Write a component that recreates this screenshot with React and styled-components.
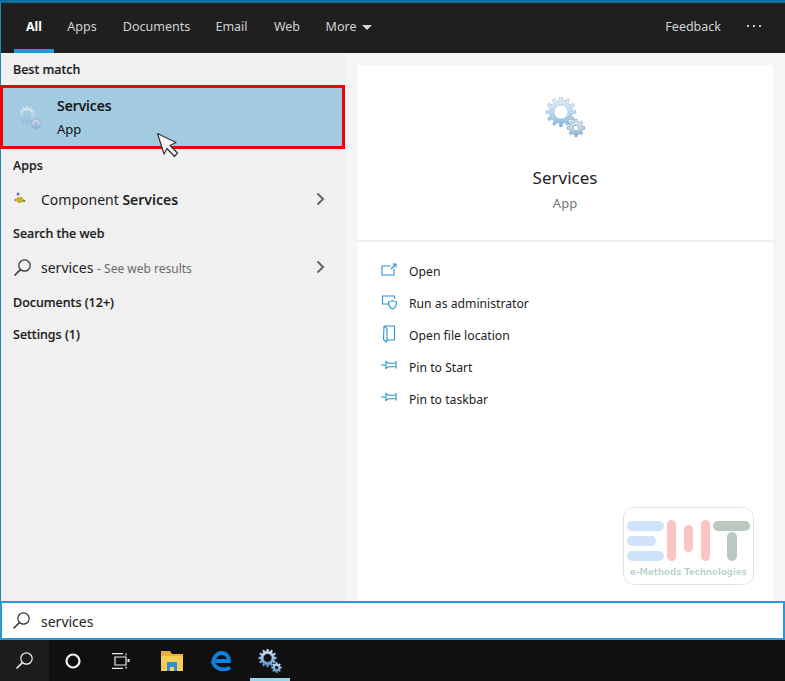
import React, { useId } from "react";
import styled, { createGlobalStyle } from "styled-components";

const Global = createGlobalStyle`
  html, body { margin: 0; padding: 0; background: #101010; }
  body { font-family: "Noto Sans", "Open Sans", sans-serif; }
`;
const Shell = styled.div`
  position: relative; width: 785px; height: 681px; overflow: hidden;
  display: flex; flex-direction: column; background: #101010;
`;
const Header = styled.header`
  height: 50px; flex: none; margin-top: 3px; padding-left: 14px; padding-right: 24px;
  box-shadow: 0 -3px 0 #0e6f9e, inset 1px 0 0 #1b88bd;
  background: #1f1f1f; display: flex; align-items: stretch; position: relative;
`;
const Tab = styled.div`
  width: ${p => p.$w}px; display: flex; align-items: center; justify-content: center; gap: 6px;
  color: ${p => (p.$active ? "#fff" : "#d2d2d2")}; font-size: 12.5px; font-weight: ${p => (p.$active ? 700 : 400)};
  box-shadow: ${p => (p.$active ? "inset 0 -4px 0 #2497d6" : "none")};
  padding-bottom: 4px; box-sizing: border-box;
`;
const Caret = styled.span`
  width: 0; height: 0; border-left: 5px solid transparent; border-right: 5px solid transparent;
  border-top: 5px solid #d8d8d8; margin-top: 2px;
`;
const HeaderRight = styled.div`
  margin-left: auto; display: flex; align-items: center; gap: 26px; color: #d2d2d2; font-size: 12.5px; padding-bottom: 4px;
`;
const Dots = styled.span`
  display: flex; gap: 4px;
  & i { width: 2px; height: 2px; background: #c8c8c8; display: block; }
`;
const Body = styled.main`
  height: 548px; flex: none; display: flex; background: #f5f5f5; box-shadow: inset 1px 0 0 #1b88bd;
`;
const Left = styled.section`
  width: 345px; flex: none; display: flex; flex-direction: column; background: #f0f0f0;
  box-shadow: inset 1px 0 0 #1b88bd; box-sizing: border-box;
`;
const Label = styled.div`
  height: ${p => p.$h}px; flex: none; padding-left: 13px; display: flex; align-items: center;
  font-size: 12.5px; font-weight: 500; color: #1b1b1b; -webkit-text-stroke: 0.2px #1b1b1b;
`;
const Best = styled.div`
  height: 64px; flex: none; box-sizing: border-box; border: 3px solid #f40000; background: #a2cbe2;
  display: flex; align-items: center; padding-left: 15px; gap: 16px;
`;
const BestText = styled.div`
  display: flex; flex-direction: column; gap: 3px; color: #111; padding-top: 1px;
`;
const BestTitle = styled.div`
  font-size: 14px; line-height: 20px; font-weight: 500; -webkit-text-stroke: 0.2px #111;
`;
const BestSub = styled.div`
  font-size: 13px; line-height: 20px;
`;
const Row = styled.div`
  height: 34px; flex: none; display: flex; align-items: center; padding: 0 20px 0 13px; font-size: 14px; color: #222;
`;
const RowIcon = styled.span`
  width: 28px; flex: none; display: flex; align-items: center;
`;
const RowText = styled.span`
  flex: 1; white-space: nowrap;
  & b { font-weight: 600; }
  & small { font-size: 12px; color: #6b6b6b; }
`;
const Right = styled.section`
  flex: 1; margin: 12px 12px 0; background: #fff; display: flex; flex-direction: column;
`;
const Hero = styled.div`
  height: 177px; flex: none; box-sizing: border-box; border-bottom: 2px solid #f0f0f0;
  display: flex; flex-direction: column; align-items: center; padding-top: 32px;
`;
const HeroTitle = styled.div`
  font-size: 17px; line-height: 24px; color: #222; margin-top: 29px;
`;
const HeroSub = styled.div`
  font-size: 13px; line-height: 18px; color: #757575; margin-top: 4px;
`;
const Actions = styled.div`
  display: flex; flex-direction: column; padding: 13px 0 0 24px;
`;
const Action = styled.div`
  height: 32px; display: flex; align-items: center; gap: 12px; font-size: 12.2px; color: #222;
`;
const ActionIcon = styled.svg`
  width: 16px; height: 18px; flex: none; fill: none; stroke: #2a93d2; stroke-width: 1.1; margin-bottom: 3px;
`;
const Watermark = styled.div`
  position: absolute; left: 623px; top: 507px; width: 131px; height: 78px; box-sizing: border-box;
  border: 1px solid #dbe9e2; border-radius: 11px; background: #fff; padding: 12px 3px 0 3px; filter: blur(0.5px);
`;
const MarkArt = styled.svg`
  display: block; width: 123px; height: 42px;
`;
const MarkText = styled.div`
  font-family: "DejaVu Sans", sans-serif; font-weight: 700; font-size: 8.6px; color: #b9d6c8; line-height: 12px; margin-top: 4px;
  white-space: nowrap; text-align: center;
`;
const SearchBox = styled.div`
  height: 39px; flex: none; box-sizing: border-box; border: 2px solid #2a9ad6; background: #fff;
  display: flex; align-items: center; padding-left: 10px; gap: 10px; font-size: 14px; color: #222;
`;
const SearchText = styled.span`
  padding-top: 2px;
`;
const Taskbar = styled.footer`
  height: 41px; flex: none; background: #101010; display: flex; align-items: stretch;
`;
const TaskBtn = styled.div`
  width: ${p => p.$w}px; flex: none; display: flex; align-items: center; justify-content: center; box-sizing: border-box;
  margin-left: ${p => p.$gap || 0}px;
  background: ${p => (p.$hot ? "#1c1c1c" : "transparent")};
  box-shadow: ${p => (p.$open ? "inset 0 -3px 0 #9fd3ee" : "none")};
`;
const Cursor = styled.svg`
  position: absolute; left: 156px; top: 132px; width: 24px; height: 26px;
`;

function gearPath(cx, cy, ro, ri, hole, teeth) {
  const pts = [];
  const step = (Math.PI * 2) / teeth;
  for (let i = 0; i < teeth; i++) {
    const a = i * step - Math.PI / 2;
    [[-0.3, ri], [-0.17, ro], [0.17, ro], [0.3, ri]].forEach(([f, r]) => {
      const t = a + f * step;
      pts.push(`${(cx + r * Math.cos(t)).toFixed(2)} ${(cy + r * Math.sin(t)).toFixed(2)}`);
    });
  }
  return `M${pts.join("L")}Z M${cx - hole} ${cy}a${hole} ${hole} 0 1 0 ${hole * 2} 0a${hole} ${hole} 0 1 0 ${-hole * 2} 0Z`;
}

function Gears({ size, dark }) {
  const id = useId();
  return (
    <svg width={size} height={size} viewBox="0 0 40 40" style={{ display: "block" }}>
      <defs>
        <linearGradient id={id} x1="0" y1="0" x2="0" y2="1">
          <stop offset="0" stopColor={dark ? "#d8e8f7" : "#e3edf5"} />
          <stop offset="0.55" stopColor={dark ? "#8fbeea" : "#b9d6ef"} />
          <stop offset="1" stopColor={dark ? "#4a86c4" : "#7fb0df"} />
        </linearGradient>
      </defs>
      <path fillRule="evenodd" fill={`url(#${id})`} stroke={dark ? "#8fa9c0" : "#a9bccb"} strokeWidth="0.6" d={gearPath(16, 15, 15, 11.5, 7, 12)} />
      <path fillRule="evenodd" fill={`url(#${id})`} stroke={dark ? "#8fa9c0" : "#71879a"} strokeWidth="0.6" d={gearPath(31, 31, 8.6, 6.4, 3, 8)} />
    </svg>
  );
}

const Mag = ({ size = 19, color = "#333" }) => (
  <svg width={size} height={size} viewBox="0 0 19 19" fill="none" stroke={color} strokeWidth="1.2" style={{ display: "block" }}>
    <circle cx="11.5" cy="7.5" r="5.7" />
    <path d="M7.4 11.6 1.5 17.5" strokeWidth="1.5" />
  </svg>
);

const Chevron = () => (
  <svg width="9" height="14" viewBox="0 0 9 14" fill="none" stroke="#666" strokeWidth="2" style={{ display: "block" }}>
    <path d="M1.5 1.5 7 7l-5.5 5.5" />
  </svg>
);

const OpenIcon = () => (
  <ActionIcon viewBox="0 0 16 18"><path d="M9.5 5H1v9h12V8M10 8l5-5M11.5 3H15v3.5" /></ActionIcon>
);
const AdminIcon = () => (
  <ActionIcon viewBox="0 0 16 18"><path d="M7 11H1.500V3h12v3" /><path d="M7.500 9c2 0 3-.8 4-1.500 1 .7 2 1.500 4 1.500 0 3.500-1.500 6-4 7-2.500-1-4-3.500-4-7Z" /></ActionIcon>
);
const FolderIcon = () => (
  <ActionIcon viewBox="0 0 16 18"><path d="M3 1h10.500v14H6M3 1 2.500 14.500 5 17l1-2M3 1l3 2.500V15" /></ActionIcon>
);
const PinIcon = () => (
  <ActionIcon viewBox="0 0 16 18"><path d="M0 8h5M5 4.500v7l2.500-1.800H15V6.300H7.500L5 4.500ZM15 4v7.500" /></ActionIcon>
);

const ComponentIcon = () => (
  <svg width="16" height="16" viewBox="0 0 16 16" style={{ display: "block" }}>
    <circle cx="5" cy="3" r="1.500" fill="#5a6fc2" />
    <circle cx="2.500" cy="9" r="1.500" fill="#c98a80" />
    <path d="M4 6h5l2 3-3 3H5L3.500 9Z" fill="#c8b71c" />
    <circle cx="11" cy="10" r="1.300" fill="#4d9a52" />
  </svg>
);

const tabs = [
  ["All", 40, true], ["Apps", 56], ["Documents", 93], ["Email", 57], ["Web", 54], ["More", 70],
];
const actions = [
  ["Open", OpenIcon], ["Run as administrator", AdminIcon], ["Open file location", FolderIcon],
  ["Pin to Start", PinIcon], ["Pin to taskbar", PinIcon],
];

export default function App() {
  return (
    <Shell>
      <Global />
      <Header>
        {tabs.map(([t, w, a]) => (
          <Tab key={t} $w={w} $active={a}>
            {t}{t === "More" && <Caret />}
          </Tab>
        ))}
        <HeaderRight>
          <span>Feedback</span>
          <Dots><i /><i /><i /></Dots>
        </HeaderRight>
      </Header>
      <Body>
        <Left>
          <Label $h={32}>Best match</Label>
          <Best>
            <Gears size={23} />
            <BestText>
              <BestTitle>Services</BestTitle>
              <BestSub>App</BestSub>
            </BestText>
          </Best>
          <Label $h={33}>Apps</Label>
          <Row>
            <RowIcon><ComponentIcon /></RowIcon>
            <RowText>Component <b>Services</b></RowText>
            <Chevron />
          </Row>
          <Label $h={34}>Search the web</Label>
          <Row>
            <RowIcon><Mag /></RowIcon>
            <RowText>services <small>- See web results</small></RowText>
            <Chevron />
          </Row>
          <Label $h={36}>Documents (12+)</Label>
          <Label $h={29}>Settings (1)</Label>
        </Left>
        <Right>
          <Hero>
            <Gears size={40} />
            <HeroTitle>Services</HeroTitle>
            <HeroSub>App</HeroSub>
          </Hero>
          <Actions>
            {actions.map(([t, I]) => (
              <Action key={t}><I /><span>{t}</span></Action>
            ))}
          </Actions>
        </Right>
      </Body>
      <SearchBox>
        <Mag />
        <SearchText>services</SearchText>
      </SearchBox>
      <Taskbar>
        <TaskBtn $w={49} $hot><Mag size={19} color="#f0f0f0" /></TaskBtn>
        <TaskBtn $w={47}>
          <svg width="16" height="16" viewBox="0 0 16 16" fill="none" stroke="#f2f2f2" strokeWidth="2.200"><circle cx="8" cy="8" r="6.500" /></svg>
        </TaskBtn>
        <TaskBtn $w={49}>
          <svg width="18" height="16" viewBox="0 0 18 16" fill="none" stroke="#eee" strokeWidth="1.200"><path d="M0 .6h11M0 15.400h11M3 4h11v8H3zM14 .5v2M14 13.500v2" /><path d="M16.500 6v3" strokeWidth="2" /></svg>
        </TaskBtn>
        <TaskBtn $w={53}>
          <svg width="22" height="20" viewBox="0 0 22 20">
            <path d="M0 0h9l2 3h11v17H0Z" fill="#e8b23a" />
            <path d="M0 5h22v15H0Z" fill="#f7cf54" />
            <path d="M6 11h10v9h-3v-4H9v4H6Z" fill="#2e8fd8" />
          </svg>
        </TaskBtn>
        <TaskBtn $w={46}>
          <svg width="20" height="20" viewBox="0 0 20 20" fill="none" stroke="#0f7fe0" strokeWidth="3.800">
            <path d="M19 16.500c-2 1.500-4.500 2-6.500 2-5.500 0-9.500-3.500-10.500-7C2.500 6 6.500 2 10.500 2c4.500 0 7.500 3 7.500 8H4" />
          </svg>
        </TaskBtn>
        <TaskBtn $w={40} $gap={6} $open><Gears size={24} dark /></TaskBtn>
      </Taskbar>
      <Watermark>
        <MarkArt viewBox="0 0 123 42">
          <rect x="0" y="1" width="37" height="10" rx="5" fill="#cfe3fb" />
          <rect x="0" y="16" width="29" height="10" rx="5" fill="#cfe3fb" />
          <rect x="0" y="31" width="37" height="10" rx="5" fill="#cfe3fb" />
          <rect x="40" y="0" width="9" height="41" rx="4.500" fill="#fdc4c4" />
          <rect x="57" y="5" width="9" height="27" rx="4.500" fill="#fdc4c4" />
          <rect x="74" y="0" width="9" height="41" rx="4.500" fill="#fdc4c4" />
          <rect x="86" y="1" width="37" height="10" rx="5" fill="#b9c9c0" />
          <rect x="100" y="12" width="10" height="29" rx="5" fill="#b9c9c0" />
        </MarkArt>
        <MarkText>e-Methods Technologies</MarkText>
      </Watermark>
      <Cursor viewBox="0 0 24 26">
        <path d="M1.500 1.500 20 10.500 14 13.500 21.500 21 18.500 24.500 11 16.500 8 22Z" fill="#f6f6f6" stroke="#333" strokeWidth="1.200" strokeLinejoin="round" />
      </Cursor>
    </Shell>
  );
}
